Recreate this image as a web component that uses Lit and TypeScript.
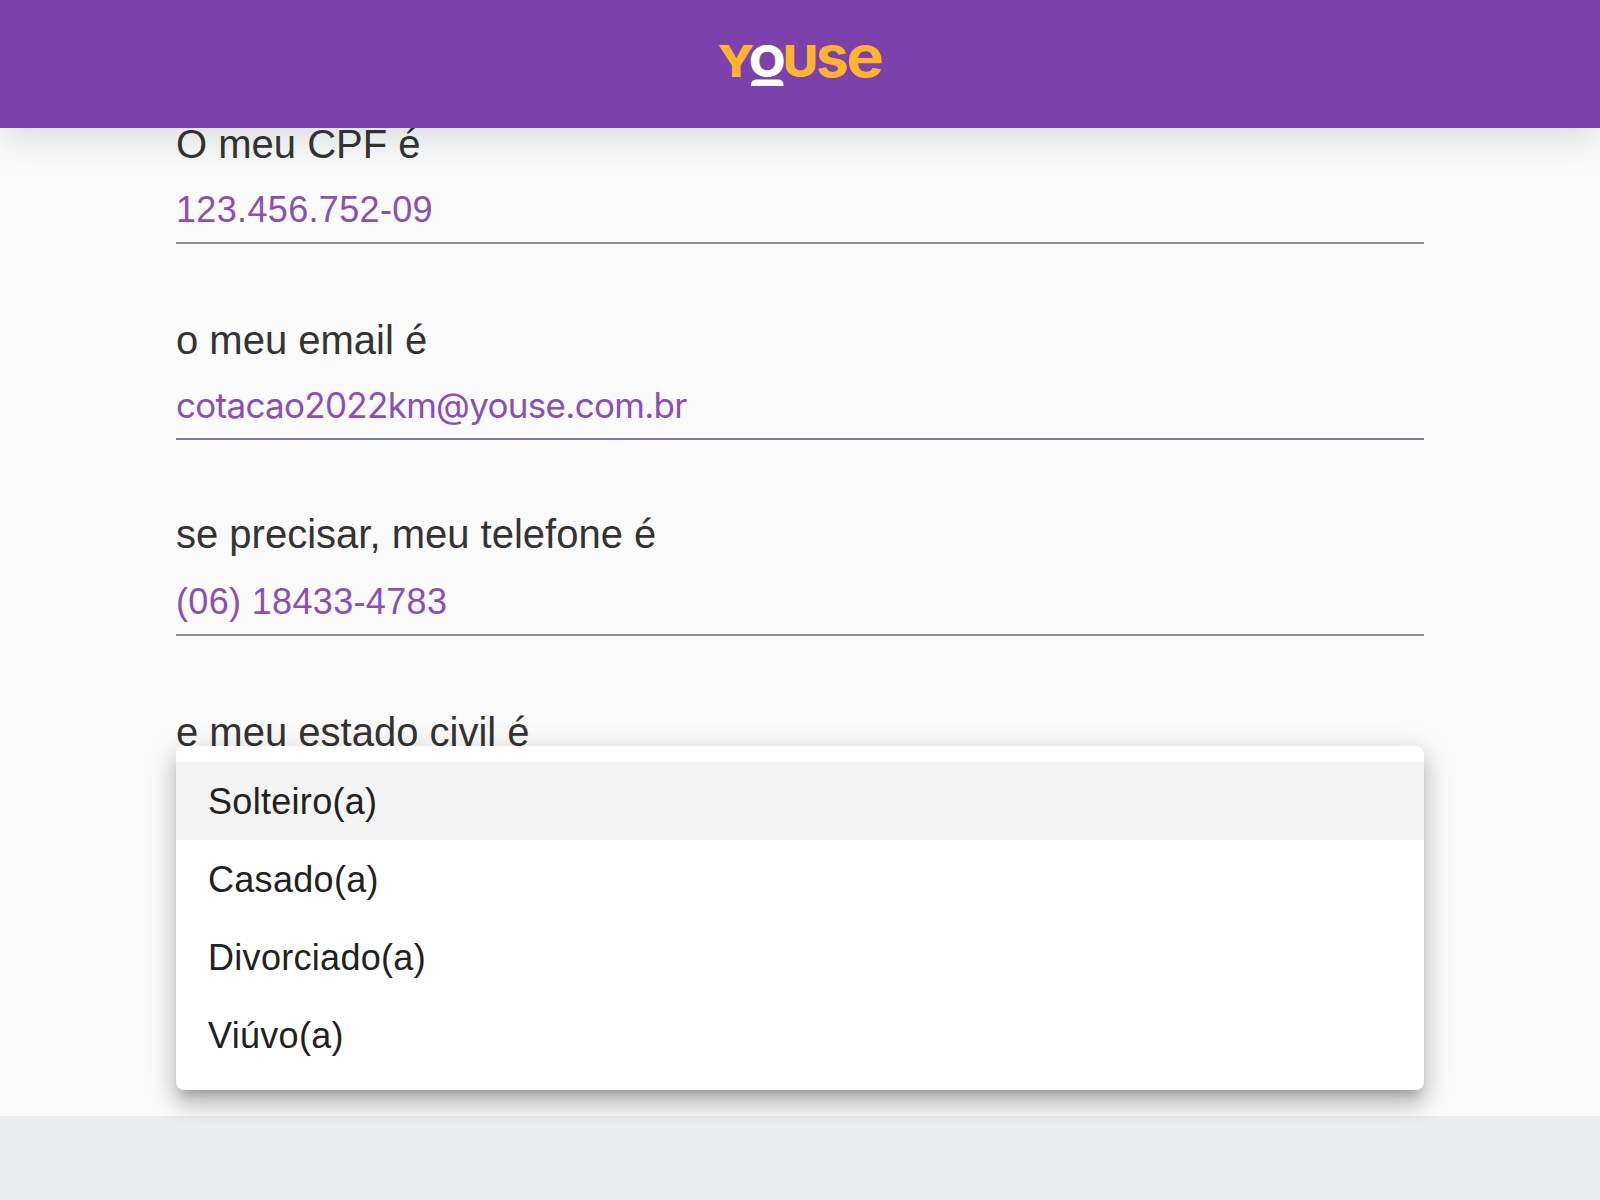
import { LitElement, html, css, svg, nothing } from "lit";
import { customElement, property } from "lit/decorators.js";
import { classMap } from "lit/directives/class-map.js";

@customElement("youse-logo")
class YouseLogo extends LitElement {
  static styles = css`
    :host { display: block; }
    svg { display: block; width: 164px; height: 44px; overflow: visible; }
    text { font-family: Inter, "Liberation Sans", sans-serif; font-weight: 800; font-size: 44px; }
    .low { font-size: 57px; font-weight: 700; }
    .gold { fill: #ffb42f; }
    .white { fill: #fff; }
  `;

  render() {
    return html`<svg viewBox="0 0 164 44" role="img" aria-label="youse">
      <text class="gold" x="-0.5" y="32.5" textLength="37" lengthAdjust="spacingAndGlyphs">Y</text>
      <text class="gold" x="65" y="32.5" textLength="35" lengthAdjust="spacingAndGlyphs">U</text>
      <text class="gold low" x="98" y="32.5" textLength="33" lengthAdjust="spacingAndGlyphs">s</text>
      <text class="gold low" x="128.5" y="32.5" textLength="37.5" lengthAdjust="spacingAndGlyphs">e</text>
      <text class="white" x="31" y="32.5" textLength="36.5" lengthAdjust="spacingAndGlyphs">O</text>
      ${svg`<path class="white" d="M33 42V41Q33 35.5 39 35.5H60Q65.5 35.5 65.5 41V42Z" />`}
    </svg>`;
  }
}

@customElement("form-field")
class FormField extends LitElement {
  @property() label = "";
  @property() value = "";
  @property() kind = "";

  static styles = css`
    :host { display: block; height: 196px; }
    .label { height: 32px; font-size: 40px; line-height: 32px; color: #333; }
    .tight { line-height: 28px; }
    .value {
      height: 84px; box-sizing: border-box; padding-top: 29px;
      border-bottom: 2px solid #929292;
      font-size: 36px; line-height: 42px; letter-spacing: 0.3375px; color: #8a50b5;
    }
    .email {
      padding-top: 28px; border-bottom-color: #76808c;
      font-family: Inter, "Liberation Sans", sans-serif; font-size: 35px; letter-spacing: -0.7px;
    }
  `;

  render() {
    return html`
      <div class=${classMap({ label: true, tight: this.kind === "phone" })}>${this.label}</div>
      ${this.value
        ? html`<div class=${classMap({ value: true, email: this.kind === "email" })}>${this.value}</div>`
        : nothing}
    `;
  }
}

@customElement("option-menu")
class OptionMenu extends LitElement {
  static styles = css`
    :host {
      display: block; box-sizing: border-box; height: 344px; padding-top: 16px;
      background: #fff; border-radius: 8px;
      box-shadow: 0 10px 10px -6px rgba(0, 0, 0, 0.2), 0 16px 20px 2px rgba(0, 0, 0, 0.14),
        0 6px 28px 4px rgba(0, 0, 0, 0.12);
    }
    .option {
      height: 78px; box-sizing: border-box; padding: 0 32px;
      font-size: 36px; line-height: 80px; letter-spacing: 0.3px; color: #212121;
    }
    .selected { background: #f4f4f4; }
  `;

  private options = ["Solteiro(a)", "Casado(a)", "Divorciado(a)", "Viúvo(a)"];

  render() {
    return this.options.map(
      (o, i) => html`<div class=${classMap({ option: true, selected: i === 0 })}>${o}</div>`
    );
  }
}

@customElement("app-root")
class AppRoot extends LitElement {
  static styles = css`
    :host {
      display: flex; flex-direction: column; height: 1200px; position: relative; overflow: hidden;
      background: #fafafa; font-family: "Liberation Sans", Arial, sans-serif;
    }
    header {
      flex: none; height: 128px; display: flex; justify-content: center; align-items: flex-start;
      box-sizing: border-box; padding-top: 44px; background: #7d41ab; position: relative; z-index: 1;
      box-shadow: 0 8px 40px rgba(30, 50, 42, 0.16);
    }
    main { flex: 1; padding: 0 176px; }
    footer { flex: none; height: 84px; background: #ebecee; }
    option-menu { position: absolute; left: 176px; right: 176px; top: 746px; z-index: 2; }
  `;

  render() {
    return html`
      <header><youse-logo></youse-logo></header>
      <main>
        <form-field label="O meu CPF é" value="123.456.752-09"></form-field>
        <form-field label="o meu email é" value="cotacao2022km@youse.com.br" kind="email"></form-field>
        <form-field label="se precisar, meu telefone é" value="(06) 18433-4783" kind="phone"></form-field>
        <form-field label="e meu estado civil é"></form-field>
      </main>
      <footer></footer>
      <option-menu></option-menu>
    `;
  }
}
